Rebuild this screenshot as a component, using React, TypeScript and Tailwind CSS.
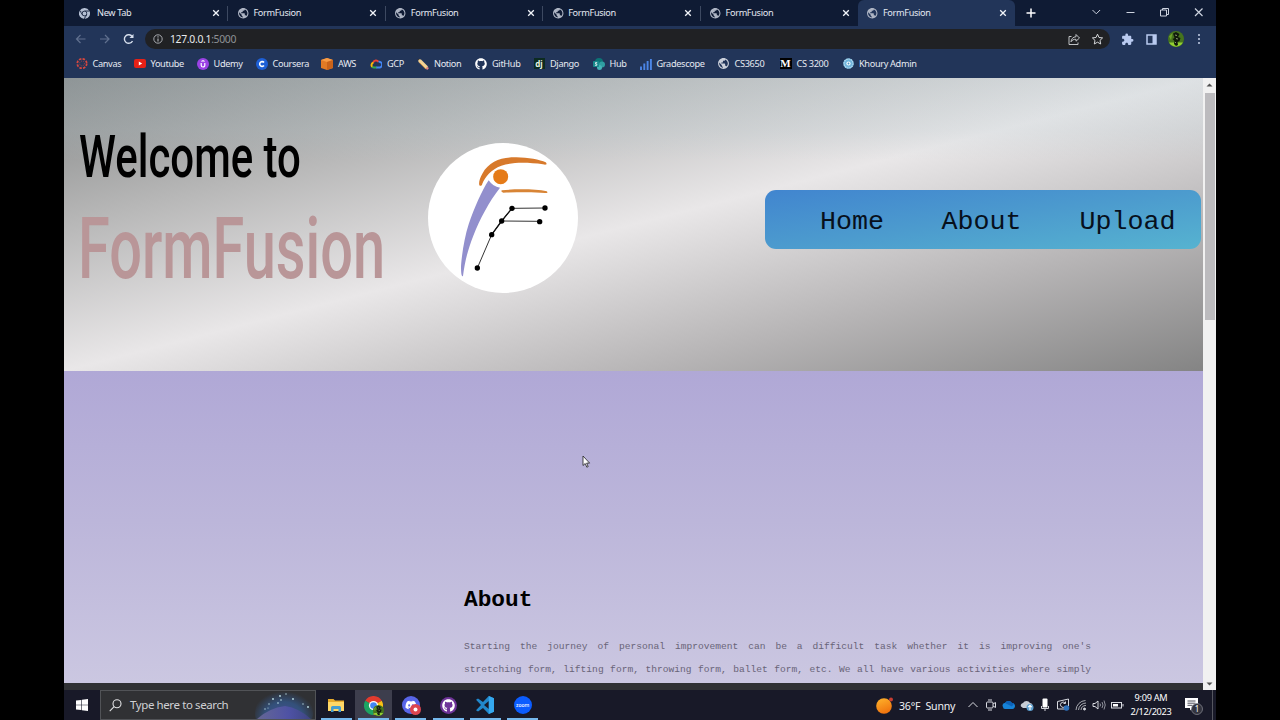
import React from "react";
import { MdPublic, MdExtension } from "react-icons/md";
import { FaGithub, FaDiscord } from "react-icons/fa";

const GLYPH = "shrink-0 block";

function Chrome({ mono = false, className = "" }: { mono?: boolean; className?: string }) {
  const c = mono ? ["#b4bfd3", "#b4bfd3", "#b4bfd3", "#17233f", "#b4bfd3"] : ["#e33b2e", "#fbc116", "#1da462", "#ffffff", "#4285f4"];
  return (
    <svg viewBox="0 0 24 24" className={`${GLYPH} ${className}`}>
      <path d="M12 12 1.6 6A12 12 0 0 1 22.4 6z" fill={c[0]} />
      <path d="M12 12 22.4 6A12 12 0 0 1 12 24z" fill={c[1]} />
      <path d="M12 12V24A12 12 0 0 1 1.6 6z" fill={c[2]} />
      {mono && <path d="M12 6.5h10.8M7.2 14.8 1.8 5.4M16.8 14.8 11.5 24" stroke={c[3]} strokeWidth="1.8" />}
      <circle cx="12" cy="12" r="5.8" fill={c[3]} />
      <circle cx="12" cy="12" r="4.2" fill={c[4]} />
    </svg>
  );
}

function Avatar({ className = "" }: { className?: string }) {
  return (
    <svg viewBox="0 0 16 16" className={`${GLYPH} ${className}`}>
      <circle cx="8" cy="8" r="8" fill="#45741d" />
      <path d="M1 11.5h14A8 8 0 0 1 1 11.5z" fill="#92cf32" />
      <path d="M1 5.5 4.5 2 3 9z" fill="#6da32b" />
      <path d="M5 2.5 8 1l3.5 2L10 6l2.500 1-1 3-2 1 .5 3-2 1-2-2 .5-3-2-2 2-1z" fill="#101a0b" />
      <path d="m7 4 2 .5M8 7.500 10 8M7 11l1 1" stroke="#a8b48c" strokeWidth=".8" />
    </svg>
  );
}

function Tab({ title, first = false, active = false, divider = false }: { title: string; first?: boolean; active?: boolean; divider?: boolean }) {
  return (
    <div className={`flex h-[26px] w-[157.4px] shrink-0 items-center ${first ? "pl-[8px]" : "pl-[8.5px]"} ${active ? "rounded-t-[6px] bg-[#223559]" : ""}`}>
      {first ? <Chrome mono className="size-[11px]" /> : <MdPublic className="size-[12.5px] shrink-0 text-[#aeb5c4]" />}
      <span className={`${first ? "ml-[7px] w-[115px]" : "ml-[4px] w-[116px]"} whitespace-nowrap text-[9.2px] leading-[14px] tracking-[-0.35px] text-[#e3e8f2]`}>{title}</span>
      <svg viewBox="0 0 8 8" className={`${GLYPH} size-[8px]`}>
        <path d="m1.200 1.200 5.600 5.600m0-5.600L1.200 6.800" stroke="#f2f5fa" strokeWidth="1.300" />
      </svg>
      {divider && <div className="ml-auto h-[15px] w-px bg-[#3d4961]" />}
    </div>
  );
}

function Mark({ label, gap, icon }: { label: string; gap: string; icon: React.ReactNode }) {
  return (
    <div className={`flex h-[14px] shrink-0 items-center ${gap}`}>
      <span className="flex w-[12px] shrink-0 items-center justify-center">{icon}</span>
      <span className="ml-[5px] whitespace-nowrap text-[9.2px] leading-[14px] tracking-[-0.34px] text-[#e6eaf2]">{label}</span>
    </div>
  );
}

function Bookmarks() {
  return (
    <div className="flex h-[23px] items-center pl-[11.5px]">
      <Mark label="Canvas" gap="w-[58px]" icon={
        <svg viewBox="0 0 14 14" className="size-[13px]">
          <circle cx="7" cy="7" r="5.500" fill="none" stroke="#d7473f" strokeWidth="2" strokeDasharray="2.900 1.420" />
          <circle cx="7" cy="7" r="2.800" fill="none" stroke="#d7473f" strokeWidth=".9" strokeDasharray=".9 1.300" />
        </svg>} />
      <Mark label="Youtube" gap="w-[63px]" icon={
        <svg viewBox="0 0 12 9" className="h-[9px] w-[12px]"><rect width="12" height="9" rx="2" fill="#e62117" /><path d="m4.800 2.500 3.400 2-3.400 2z" fill="#fff" /></svg>} />
      <Mark label="Udemy" gap="w-[59px]" icon={
        <svg viewBox="0 0 12 12" className="size-[12px]"><circle cx="6" cy="6" r="6" fill="#9b42e5" /><path d="M4.200 5v2.200a1.800 1.800 0 0 0 3.600 0V5M4.500 3.500 6 2.600l1.500.9" fill="none" stroke="#fff" strokeWidth="1.200" /></svg>} />
      <Mark label="Coursera" gap="w-[65.500px]" icon={
        <svg viewBox="0 0 12 12" className="size-[12px]"><circle cx="6" cy="6" r="6" fill="#1d5fd6" /><path d="M8 4.500a2.400 2.400 0 1 0 0 3" fill="none" stroke="#fff" strokeWidth="1.600" /></svg>} />
      <Mark label="AWS" gap="w-[49px]" icon={
        <svg viewBox="0 0 12 12" className="size-[12px]"><path d="m0 2 6-2 6 2v8l-6 2-6-2z" fill="#e17a25" /><path d="m0 2 6 2 6-2-6-2z" fill="#f79b45" /><path d="M6 4v8l6-2V2z" fill="#c9631a" /></svg>} />
      <Mark label="GCP" gap="w-[47px]" icon={
        <svg viewBox="0 0 14 11" fill="none" strokeWidth="2.300" className="h-[10px] w-[13px]">
          <path d="M3.500 4A3.700 3.700 0 0 1 10 3" stroke="#ea4335" /><path d="M10 3a3.200 3.200 0 0 1 1.500 6.500H7" stroke="#4285f4" /><path d="M7.500 9.500H4.500a3 3 0 0 1-2-.8" stroke="#34a853" /><path d="M2.600 8.800A2.800 2.800 0 0 1 4 4" stroke="#fbbc05" />
        </svg>} />
      <Mark label="Notion" gap="w-[58px]" icon={
        <svg viewBox="0 0 12 12" className="size-[12px]"><path d="m1 1 3 .5 7 7-2.500 2.500-7-7z" fill="#f3d294" /><path d="m2.500 4.500 6.500 6.500" stroke="#d79b4f" /><path d="m11 8.500.7 2.200-1.200 1-2-.7z" fill="#e78786" /><path d="m.5.5 2 .7-1.200 1.200z" fill="#3b3532" /></svg>} />
      <Mark label="GitHub" gap="w-[58px]" icon={<FaGithub className="size-[12px] shrink-0 text-white" />} />
      <Mark label="Django" gap="w-[59.500px]" icon={
        <span className="flex size-[11px] items-center justify-center bg-[#0c2b20] text-[8px] leading-[9px] font-bold text-[#e8f5e4]">dj</span>} />
      <Mark label="Hub" gap="w-[47px]" icon={
        <svg viewBox="0 0 12 12" className="size-[12px]"><circle cx="6" cy="4" r="4" fill="#0c7475" /><circle cx="9" cy="6.500" r="3" fill="#2f9fa2" /><circle cx="6.500" cy="9.500" r="2.500" fill="#45b5b8" /><rect y="3" width="6" height="6" rx=".8" fill="#17898b" /><path d="M4.200 4.600H2.500v1.300h1.300v1.400H1.900" fill="none" stroke="#fff" strokeWidth=".8" /></svg>} />
      <Mark label="Gradescope" gap="w-[78px]" icon={
        <svg viewBox="0 0 12 12" className="size-[12px] shrink-0"><path d="M1 12V8.500M4.300 12V5.500M7.600 12V3M10.900 12V1" stroke="#4b86e8" strokeWidth="1.900" /></svg>} />
      <Mark label="CS3650" gap="w-[62px]" icon={<MdPublic className="size-[13px] shrink-0 text-[#cbd0da]" />} />
      <Mark label="CS 3200" gap="w-[62.500px]" icon={
        <span className="flex h-[11px] w-[12px] shrink-0 items-center justify-center bg-black font-['Liberation_Serif',serif] text-[11px] leading-[11px] font-bold text-white">M</span>} />
      <Mark label="Khoury Admin" gap="" icon={
        <svg viewBox="0 0 12 12" className="size-[11px]"><circle cx="6" cy="6" r="5.700" fill="#6fb4dc" /><circle cx="6" cy="6" r="4.900" fill="none" stroke="#bfe0f1" strokeWidth="1.300" strokeDasharray="1.500 1" /><circle cx="6" cy="6" r="2.300" fill="#f2fafd" /><circle cx="6" cy="6" r="1" fill="#4e91be" /></svg>} />
    </div>
  );
}

function BrowserChrome() {
  return (
    <div className="flex h-[78px] shrink-0 flex-col bg-[#223559]">
      <div className="flex h-[26px] items-center bg-[#0f1b34] pl-[7px]">
        <Tab title="New Tab" first divider />
        <Tab title="FormFusion" divider />
        <Tab title="FormFusion" divider />
        <Tab title="FormFusion" divider />
        <Tab title="FormFusion" />
        <Tab title="FormFusion" active />
        <svg viewBox="0 0 10 10" className={`${GLYPH} ml-[11px] size-[10px]`}><path d="M5 .5v9M.5 5h9" stroke="#fff" strokeWidth="1.500" /></svg>
        <svg viewBox="0 0 120 12" fill="none" stroke="#cdd3df" className={`${GLYPH} mb-[3px] ml-[55px] h-[12px] w-[120px]`}>
          <path d="m1.500 4 3.800 3.800L9.100 4" />
          <path d="M35.500 6.500h8" />
          <path d="M69.500 4h6v6h-6zM71.500 4V2.500h6v6H76" />
          <path d="m104 2.500 7.500 7.500m0-7.500L104 10" strokeWidth="1.200" />
        </svg>
      </div>
      <div className="flex h-[26px] items-center pl-[11px]">
        <svg viewBox="0 0 62 12" fill="none" stroke="#60708f" strokeWidth="1.200" className={`${GLYPH} h-[12px] w-[62px]`}>
          <path d="M10.500 6H1.500M5.500 2 1.500 6l4 4" />
          <path d="M25 6h9M30 2l4 4-4 4" />
          <path d="M57.500 8A4.300 4.300 0 1 1 57.200 3.500" stroke="#d7dfed" strokeWidth="1.400" />
          <path d="M58.500 1v4h-4z" fill="#d7dfed" stroke="none" />
        </svg>
        <div className="ml-[8px] flex h-[20px] w-[965px] items-center rounded-full bg-[#202124] pl-[8px]">
          <svg viewBox="0 0 10 10" fill="none" stroke="#b5b8bd" className={`${GLYPH} size-[10px]`}><circle cx="5" cy="5" r="4.200" strokeWidth=".9" /><path d="M5 4.500v3M5 2.300v1.100" strokeWidth="1.100" /></svg>
          <span className="ml-[7px] text-[10.400px] leading-[16px] tracking-[-0.32px] text-[#e8eaed]">127.0.0.1<span className="text-[#8e9196]">:5000</span></span>
          <svg viewBox="0 0 36 12" fill="none" stroke="#c8cace" strokeWidth=".95" className={`${GLYPH} ml-auto mr-[6px] h-[12px] w-[36px]`}>
            <path d="M3.500 3.500H1v8h9V9.500" />
            <path d="M8 1.500 11.500 5 8 8.200V6.300C5.500 6.200 4.200 7 3 8.800 3.300 5.800 5 4 8 3.700z" strokeLinejoin="round" />
            <path d="m29.500 1.200 1.500 3.300 3.600.4L32 7.400l.7 3.600-3.200-1.800L26.300 11l.7-3.600-2.600-2.500 3.600-.4z" stroke="#dddfe2" />
          </svg>
        </div>
        <MdExtension className="ml-[11px] size-[13px] shrink-0 text-[#b9caf0]" />
        <svg viewBox="0 0 11 11" className={`${GLYPH} ml-[12px] size-[11px]`}><path d="M1 1h9v9H1z" fill="none" stroke="#b9caf0" strokeWidth="1.500" /><path d="M6.500 1H10v9H6.500z" fill="#b9caf0" /></svg>
        <Avatar className="ml-[11px] size-[16px]" />
        <svg viewBox="0 0 4 12" fill="#c6d1e8" className={`${GLYPH} ml-[13px] h-[12px] w-[4px]`}><circle cx="2" cy="2" r="1" /><circle cx="2" cy="6" r="1" /><circle cx="2" cy="10" r="1" /></svg>
      </div>
      <Bookmarks />
    </div>
  );
}

function Logo() {
  return (
    <svg viewBox="0 0 450 450" className="block size-[150px]">
      <circle cx="225" cy="225" r="225" fill="#fff" />
      <path d="M182 112C162 142 139 194 122 244C109 284 101 338 99 370C99 393 101 402 105 399C110 358 119 321 136 278C155 229 183 176 216 134C202 132 190 124 182 112z" fill="#928fcd" />
      <path d="M158 128C149 129 154 107 163 92C184 53 223 42 265 43C300 44 336 50 353 58C359 64 354 67 345 64C299 58 254 57 220 68C189 79 172 101 163 122C162 126 160 128 158 128z" fill="#d7792b" />
      <circle cx="218" cy="101" r="22.500" fill="#e57b18" />
      <path d="M222 142C254 138 321 137 356 145C361 149 357 151 351 150C312 146 265 148 226 149C219 147 219 143 222 142z" fill="#d88435" />
      <path d="m148 375 43-100 30-41 31-38 99-1M221 234l114 1" fill="none" stroke="#333" strokeWidth="3" />
      <path d="m191 275 30-41 31-38" fill="none" stroke="#111" strokeWidth="4" />
      <g fill="#000"><circle cx="148" cy="375" r="8" /><circle cx="191" cy="275" r="8" /><circle cx="221" cy="234" r="8" /><circle cx="252" cy="196" r="8" /><circle cx="351" cy="195" r="8" /><circle cx="335" cy="236" r="8" /></g>
    </svg>
  );
}

function Page() {
  return (
    <main className="flex w-[1139px] flex-col bg-[#b4acd6] font-['Liberation_Mono',monospace]">
      <header className="flex h-[293px] shrink-0 bg-[linear-gradient(#b4ccd438,#b4ccd42b_18%,#b4ccd400_28%),linear-gradient(to_bottom_right,#848686_0%,#b7b7b7_25%,#e9e7e8_50%,#b7b5b6_75%,#848484_100%)] pl-[15px]">
        <div className="w-[349px] shrink-0 pt-[47px] font-['Roboto',sans-serif] whitespace-nowrap">
          <h1 className="h-[64px] w-max origin-left scale-x-[0.699] text-[60px] leading-[64px] font-medium text-black">Welcome to</h1>
          <h1 className="mt-[15px] -ml-[1px] h-[90px] w-max origin-left scale-x-[0.671] text-[86px] leading-[90px] font-medium text-[#b99698]">FormFusion</h1>
        </div>
        <div className="shrink-0 pt-[65px]"><Logo /></div>
        <nav className="mt-[112px] ml-[187px] flex h-[59px] w-[436px] shrink-0 items-center rounded-[11px] bg-[linear-gradient(to_bottom_right,#4185cf,#4c9bce_50%,#56b3d0)] pl-[55px] text-[26.700px] leading-[32px] text-[#07101c]">
          <a className="mt-[4px] w-[121.500px]">Home</a>
          <a className="mt-[4px] w-[138px]">About</a>
          <a className="mt-[4px]">Upload</a>
        </nav>
      </header>
      <section className="h-[312px] overflow-hidden bg-[linear-gradient(#b0a8d6,#bcb6da_48%,#cbc7e1)] pl-[400px]">
        <h2 className="mt-[214px] text-[22.800px] leading-[30px] font-bold text-black">About</h2>
        <div className="mt-[20px] w-[627px] text-[9.600px] leading-[23px] text-[#696478]">
          <p className="[text-align-last:justify]">Starting the journey of personal improvement can be a difficult task whether it is improving one's</p>
          <p className="[text-align-last:justify]">stretching form, lifting form, throwing form, ballet form, etc. We all have various activities where simply</p>
        </div>
      </section>
      <div className="h-[7px] bg-[#303134]" />
    </main>
  );
}

function Scrollbar() {
  return (
    <div className="flex w-[13px] flex-col items-center bg-[#f1f1f1]">
      <svg viewBox="0 0 13 15" className="h-[15px] w-[13px]"><path d="M3.500 8.500h6l-3-3z" fill="#505050" /></svg>
      <div className="h-[227px] w-[10px] bg-[#bcbbbe]" />
      <svg viewBox="0 0 13 13" className="mt-auto h-[13px] w-[13px]"><path d="M3.500 5.500h6l-3 3z" fill="#505050" /></svg>
    </div>
  );
}

function PinnedApp({ children, on = false }: { children: React.ReactNode; on?: boolean }) {
  return (
    <div className={`flex h-[30px] w-[37.300px] shrink-0 flex-col items-center ${on ? "bg-[#3d3e4d]" : ""}`}>
      <div className="flex h-[28px] items-center pt-[2px]">{children}</div>
      <div className="h-[2px] w-[31px] bg-[#76b9ed]" />
    </div>
  );
}

function Tray() {
  const line = { fill: "none", stroke: "#d8dae0", strokeWidth: 1 } as const;
  return (
    <div className="ml-[9px] flex items-center gap-[4px]">
      <svg viewBox="0 0 14 14" {...line} className="size-[14px]"><path d="m2.500 9 4.500-4.500L11.500 9" /></svg>
      <svg viewBox="0 0 14 14" {...line} className="size-[14px]"><rect x="2.500" y="4" width="6.500" height="6" rx="1" /><path d="m9 6 2.500-1.500v5L9 8M4 2h4M4 12h4" /></svg>
      <svg viewBox="0 0 14 14" className="size-[14px]"><path d="M1 9a2.500 2.500 0 0 1 2-4 4 4 0 0 1 7 0c2 0 3 1.500 3 3s-1 3-2.500 3H3A2 2 0 0 1 1 9z" fill="#1683d8" /><path d="m3 5 7 3.500 2-3C11 5 10.500 5 10 5a4 4 0 0 0-7 0z" fill="#0d62b8" /></svg>
      <svg viewBox="0 0 14 14" className="size-[14px]"><path d="M1 8.500A2.500 2.500 0 0 1 3 5a4 4 0 0 1 7 0 3 3 0 0 1 2 5H3z" fill="#c7ccd4" /><circle cx="10" cy="9.500" r="3.500" fill="#5e9fcf" /><path d="M10 12V7.500M8.200 9.200 10 7.400l1.800 1.800" fill="none" stroke="#fff" strokeWidth="1.100" /></svg>
      <svg viewBox="0 0 14 14" className="size-[14px]"><rect x="4.500" y=".5" width="5" height="9" rx="1" fill="#fff" /><path d="M3.500 8v2.500h7V8M7 10.500V13" fill="none" stroke="#d4d5da" /></svg>
      <svg viewBox="0 0 14 14" {...line} className="size-[14px]"><path d="M10 11H1.500V3.500L12.500 1v7" /><path d="M9 5a2.600 2.600 0 1 0 0 3.500M9.500 3.500V5.500h-2" /><circle cx="10.500" cy="10" r="2.800" fill="#2e72bd" stroke="none" /></svg>
      <svg viewBox="0 0 14 14" {...line} className="size-[14px]"><path d="M2 12A10 10 0 0 1 11.500 2.500M4.500 12A7.500 7.500 0 0 1 12 5M7 12a5 5 0 0 1 5-4.500" stroke="#a7a9b0" /><circle cx="10.500" cy="11" r="1" fill="#d8dae0" /></svg>
      <svg viewBox="0 0 14 14" {...line} className="size-[14px]"><path d="M1 5.500h2L6 3v8L3 8.500H1z" /><path d="M8 5.500q1 1.500 0 3M10 4q2 3 0 6M12 2.500q2.500 4.500 0 9" stroke="#8f919b" /></svg>
      <svg viewBox="0 0 14 14" {...line} className="size-[14px]"><rect x="1.500" y="4.500" width="10" height="5.500" /><path d="M13 6v2.500" /><rect x="3" y="6" width="5" height="2.500" fill="#fff" stroke="none" /></svg>
    </div>
  );
}

function Taskbar() {
  return (
    <div className="flex h-[30px] shrink-0 items-center bg-[#181928] text-white">
      <svg viewBox="0 0 12 12" fill="#fff" className={`${GLYPH} ml-[12px] size-[12px]`}><path d="M0 1.600 5.300.900v4.800H0zM5.900.800 12 0v5.700H5.900zM0 6.300h5.300v4.800L0 10.400zM5.900 6.300H12V12l-6.100-.8z" /></svg>
      <div className="ml-[12px] flex h-[30px] w-[216px] shrink-0 items-center border border-[#515357] bg-[#303134] pl-[8px]">
        <svg viewBox="0 0 13 13" fill="none" stroke="#e2e3e5" strokeWidth="1.100" className={`${GLYPH} size-[13px]`}><circle cx="8" cy="4.800" r="4" /><path d="M5.100 7.700.700 12.200" /></svg>
        <span className="ml-[8px] text-[11.500px] leading-[18px] tracking-[-0.4px] whitespace-nowrap text-[#cfd0d3]">Type here to search</span>
        <svg viewBox="0 0 60 28" className={`${GLYPH} ml-auto h-[28px] w-[60px]`}>
          <defs>
            <radialGradient id="sky" cx=".5" cy=".6" r=".55"><stop offset="0" stopColor="#474f94" /><stop offset=".6" stopColor="#33507a" /><stop offset="1" stopColor="#303134" /></radialGradient>
            <linearGradient id="hill" x2="1"><stop stopColor="#6e6b9b" /><stop offset=".6" stopColor="#5052a8" /><stop offset="1" stopColor="#414485" /></linearGradient>
          </defs>
          <ellipse cx="29" cy="22" rx="29" ry="24" fill="url(#sky)" />
          <path d="M2 28Q14 17 30 15q14 2 26 13z" fill="url(#hill)" fillOpacity=".85" />
          <g fill="#bfe1e8"><circle cx="18" cy="8" r=".9" /><circle cx="25" cy="5" r=".9" /><circle cx="23" cy="12" r=".8" /><circle cx="31" cy="3" r=".7" /><circle cx="38" cy="8" r=".9" /><circle cx="14" cy="13" r=".7" /><circle cx="26" cy="9" r=".8" /><circle cx="48" cy="13" r=".7" /><circle cx="53" cy="16" r=".9" /><circle cx="10" cy="18" r=".7" /><circle cx="13" cy="17" r=".5" /></g>
        </svg>
      </div>
      <div className="ml-[1.500px] flex">
        <PinnedApp>
          <svg viewBox="0 0 18 15" className="h-[15px] w-[18px]"><path d="M1 1h5.500L8 2.500h9V13H1z" fill="#e8ab2c" /><path d="M1 4h16v9H1z" fill="#ffd766" /><path d="M4 14V9.500A1.500 1.500 0 0 1 5.500 8h7A1.500 1.500 0 0 1 14 9.500V14h-2.500v-3h-5v3z" fill="#459dcf" /></svg>
        </PinnedApp>
        <PinnedApp on>
          <div className="relative"><Chrome className="size-[19px]" /><Avatar className="absolute -right-[1px] -bottom-[1px] size-[11px]" /></div>
        </PinnedApp>
        <PinnedApp>
          <div className="relative flex size-[18px] items-center justify-center rounded-full bg-[#5865e8]">
            <FaDiscord className="size-[12px] text-white" />
            <svg viewBox="0 0 10 10" className="absolute -right-[1px] -bottom-[1px] size-[11px]"><circle cx="5" cy="5" r="5" fill="#dc4550" /><circle cx="5" cy="5" r="1.800" fill="#fff" /></svg>
          </div>
        </PinnedApp>
        <PinnedApp>
          <div className="flex size-[17px] items-center justify-center rounded-full bg-[#6e3398]"><FaGithub className="size-[13px] text-white" /></div>
        </PinnedApp>
        <PinnedApp>
          <svg viewBox="0 0 18 18" className="size-[18px]"><path d="M12.800 0 18 2.200v13.600L12.800 18 7 12 2 15.500l-2-1.200L5 9 0 3.700 2 2.500 7 6z" fill="#2188cc" /><path d="M12.800 5v8L8 9z" fill="#181928" /><path d="M12.800 0 18 2.200v13.600L12.800 18z" fill="#35a8ef" /></svg>
        </PinnedApp>
        <PinnedApp>
          <div className="flex size-[18px] items-center justify-center rounded-full bg-[#0b5cff] text-[5px] leading-[7px] font-medium text-white">zoom</div>
        </PinnedApp>
      </div>
      <div className="ml-auto flex items-center">
        <svg viewBox="0 0 17 17" className={`${GLYPH} size-[17px]`}><defs><linearGradient id="sun" x2=".4" y2="1"><stop stopColor="#ffb52c" /><stop offset="1" stopColor="#f0750f" /></linearGradient></defs><circle cx="8" cy="9" r="7.800" fill="url(#sun)" /><circle cx="15" cy="2.500" r="2" fill="#c83e32" /></svg>
        <span className="ml-[6px] w-[58px] pt-px text-[10.600px] leading-[16px] tracking-[-0.200px] whitespace-pre text-[#f0f1f4]">36°F  Sunny</span>
        <Tray />
        <div className="ml-[4px] w-[46px] text-center text-[9.200px] leading-[14px] tracking-[-0.280px] whitespace-nowrap">
          <div>9:09 AM</div>
          <div>2/12/2023</div>
        </div>
        <svg viewBox="0 0 20 20" className={`${GLYPH} ml-[10px] size-[20px]`}>
          <path d="M1 3h13v10H8.500L6 15.500V13H1z" fill="#fff" />
          <path d="M3.500 6h8M3.500 8.200h8M3.500 10.300h5" stroke="#393a48" strokeWidth=".9" />
          <circle cx="13" cy="14" r="5.500" fill="#32333e" stroke="#8d8e96" strokeWidth=".7" />
          <text x="13" y="17" fontSize="8" textAnchor="middle" fill="#fff">1</text>
        </svg>
        <div className="ml-[8px] mr-[3px] h-[30px] w-px bg-[#55565f]" />
      </div>
    </div>
  );
}

export default function App() {
  return (
    <div className="relative flex h-[720px] w-[1280px] justify-center overflow-hidden bg-black font-['Noto_Sans','Open_Sans',sans-serif]">
      <div className="flex w-[1152px] flex-col overflow-hidden">
        <BrowserChrome />
        <div className="flex h-[612px] shrink-0"><Page /><Scrollbar /></div>
        <Taskbar />
      </div>
      <svg viewBox="0 0 9 13" className="absolute top-[455px] left-[582px] h-[13px] w-[9px]"><path d="M1 1v9.500l2.200-2 1.600 3.700 1.400-.6-1.600-3.500h3z" fill="#fff" stroke="#202020" strokeWidth=".8" /></svg>
    </div>
  );
}
